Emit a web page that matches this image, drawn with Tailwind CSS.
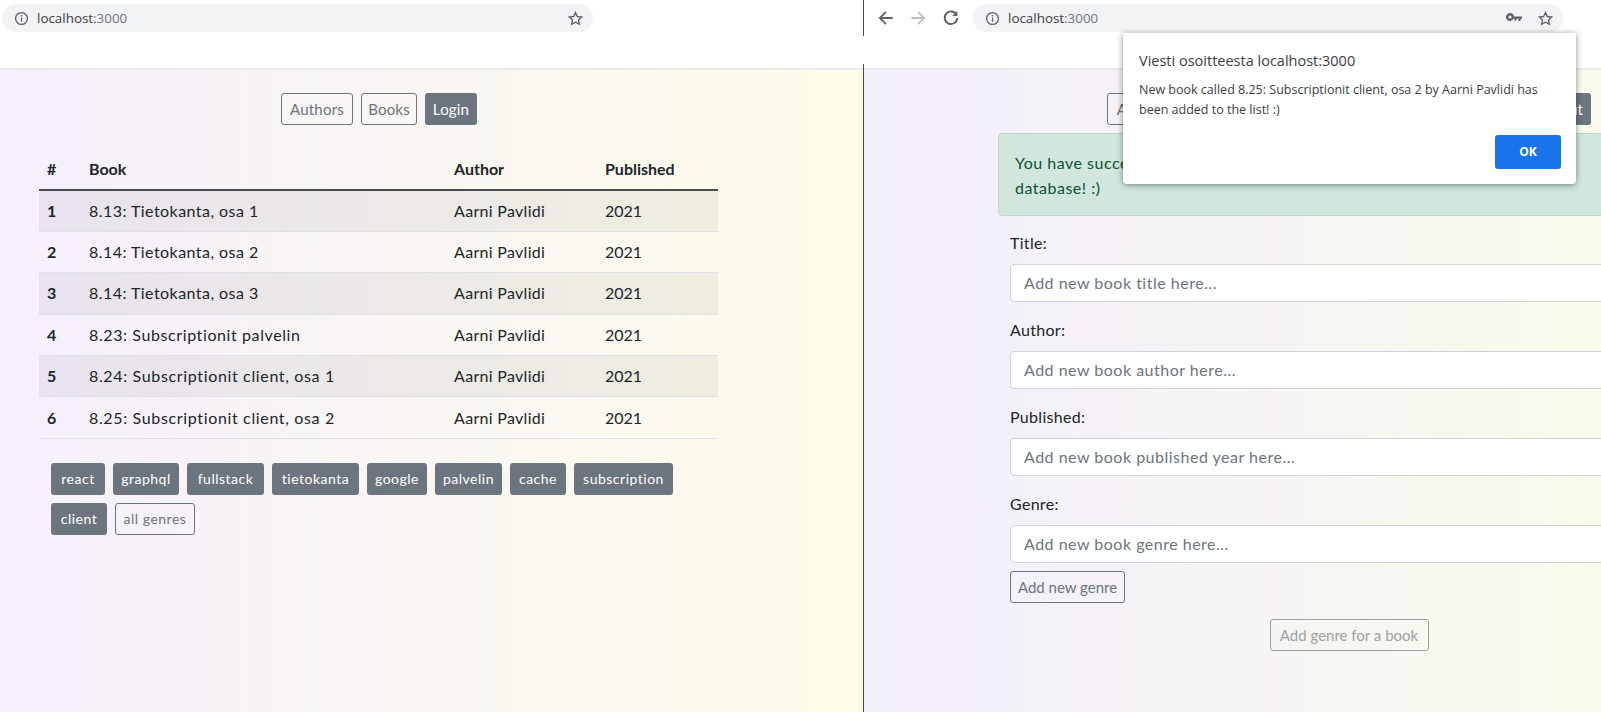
<!DOCTYPE html>
<html>
<head>
<meta charset="utf-8">
<script src="https://cdn.jsdelivr.net/npm/@tailwindcss/browser@4"></script>
</head>
<body class="overflow-hidden bg-white">
<div class="relative flex h-[712px] w-[1601px] overflow-hidden font-['Lato',sans-serif] text-[16px] text-[#212529]">
  <!-- left window -->
  <section class="flex w-[863px] shrink-0 flex-col">
    <header class="h-[70px] shrink-0 border-b-2 border-[#e9e9ea] bg-white pt-1 pl-[2px]">
      <div class="flex h-7 w-[591px] items-center rounded-full bg-[#f1f3f4] pl-3 pr-[9px] font-['Open_Sans',sans-serif] text-[13.4px] text-[#3c4043]">
        <svg class="mr-2 size-[15px]" viewBox="0 0 16 16" fill="none" stroke="#5f6368" stroke-width="1.4"><circle cx="8" cy="8" r="6.3"/><path d="M8 7v4.5M8 4.2v1.6"/></svg>
        <span>localhost<span class="text-[#70757a]">:3000</span></span>
        <svg class="ml-auto size-[17px]" viewBox="0 0 24 24" fill="none" stroke="#5f6368" stroke-width="1.9"><path d="M12 3.5l2.6 5.7 6.1.7-4.5 4.2 1.2 6.1-5.4-3-5.4 3 1.2-6.1-4.5-4.2 6.1-.7z"/></svg>
      </div>
    </header>
    <main class="flex-1 bg-gradient-to-r from-[#f5f0fb] to-[#fdfdea] pl-[39px] pt-[23px]">
      <div class="w-[679px]">
        <nav class="flex justify-center gap-2 pl-[1px] text-[15px] tracking-[0.2px]">
          <a class="flex h-8 w-[72px] items-center justify-center rounded-[3px] border border-[#6c757d] text-[#6c757d]">Authors</a>
          <a class="flex h-8 w-[56px] items-center justify-center rounded-[3px] border border-[#6c757d] text-[#6c757d]">Books</a>
          <a class="flex h-8 w-[52px] items-center justify-center rounded-[3px] bg-[#6c757d] text-white">Login</a>
        </nav>
        <table class="mt-6 w-[679px] table-fixed border-collapse text-left">
          <colgroup><col class="w-[42px]"><col class="w-[365px]"><col class="w-[151px]"><col class="w-[121px]"></colgroup>
          <thead class="font-bold">
            <tr class="h-[41px] border-b-2 border-[#4a4d50]"><th class="px-2">#</th><th class="px-2">Book</th><th class="px-2">Author</th><th class="px-2">Published</th></tr>
          </thead>
          <tbody>
            <tr class="h-[41.4px] border-b border-[#dee2e6] bg-black/5"><th class="px-2">1</th><td class="px-2 tracking-[0.45px]">8.13: Tietokanta, osa 1</td><td class="px-2 tracking-[0.3px]">Aarni Pavlidi</td><td class="px-2">2021</td></tr>
            <tr class="h-[41.4px] border-b border-[#dee2e6]"><th class="px-2">2</th><td class="px-2 tracking-[0.45px]">8.14: Tietokanta, osa 2</td><td class="px-2 tracking-[0.3px]">Aarni Pavlidi</td><td class="px-2">2021</td></tr>
            <tr class="h-[41.4px] border-b border-[#dee2e6] bg-black/5"><th class="px-2">3</th><td class="px-2 tracking-[0.45px]">8.14: Tietokanta, osa 3</td><td class="px-2 tracking-[0.3px]">Aarni Pavlidi</td><td class="px-2">2021</td></tr>
            <tr class="h-[41.4px] border-b border-[#dee2e6]"><th class="px-2">4</th><td class="px-2 tracking-[0.6px]">8.23: Subscriptionit palvelin</td><td class="px-2 tracking-[0.3px]">Aarni Pavlidi</td><td class="px-2">2021</td></tr>
            <tr class="h-[41.4px] border-b border-[#dee2e6] bg-black/5"><th class="px-2">5</th><td class="px-2 tracking-[0.65px]">8.24: Subscriptionit client, osa 1</td><td class="px-2 tracking-[0.3px]">Aarni Pavlidi</td><td class="px-2">2021</td></tr>
            <tr class="h-[41.4px] border-b border-[#dee2e6]"><th class="px-2">6</th><td class="px-2 tracking-[0.65px]">8.25: Subscriptionit client, osa 2</td><td class="px-2 tracking-[0.3px]">Aarni Pavlidi</td><td class="px-2">2021</td></tr>
          </tbody>
        </table>
        <div class="ml-3 mt-6 flex w-[667px] flex-wrap gap-2 text-[14px] tracking-[0.5px] text-white">
          <a class="flex h-8 w-[54px] items-center justify-center rounded-[3px] bg-[#6c757d]">react</a>
          <a class="flex h-8 w-[66px] items-center justify-center rounded-[3px] bg-[#6c757d]">graphql</a>
          <a class="flex h-8 w-[77px] items-center justify-center rounded-[3px] bg-[#6c757d]">fullstack</a>
          <a class="flex h-8 w-[87px] items-center justify-center rounded-[3px] bg-[#6c757d]">tietokanta</a>
          <a class="flex h-8 w-[60px] items-center justify-center rounded-[3px] bg-[#6c757d]">google</a>
          <a class="flex h-8 w-[67px] items-center justify-center rounded-[3px] bg-[#6c757d]">palvelin</a>
          <a class="flex h-8 w-[56px] items-center justify-center rounded-[3px] bg-[#6c757d]">cache</a>
          <a class="flex h-8 w-[99px] items-center justify-center rounded-[3px] bg-[#6c757d]">subscription</a>
          <a class="flex h-8 w-[56px] items-center justify-center rounded-[3px] bg-[#6c757d]">client</a>
          <a class="flex h-8 w-[80px] items-center justify-center rounded-[3px] border border-[#6c757d] text-[#6c757d]">all genres</a>
        </div>
      </div>
    </main>
  </section>

  <div class="w-[1px] shrink-0 bg-[#4a4a4a]"></div>

  <!-- right window -->
  <section class="flex min-w-0 flex-1 flex-col">
    <header class="h-[70px] shrink-0 border-b-2 border-[#e9e9ea] bg-white pt-1">
      <div class="flex items-center">
        <div class="flex w-[109px] items-center pl-[13px] gap-[14px]">
          <svg class="size-[18px]" viewBox="0 0 16 16" fill="none" stroke="#5f6368" stroke-width="1.6"><path d="M14 8H2.5M8 2.5L2.5 8 8 13.500"/></svg>
          <svg class="size-[18px]" viewBox="0 0 16 16" fill="none" stroke="#bcbfc3" stroke-width="1.6"><path d="M2 8h11.5M8 2.5L13.5 8 8 13.500"/></svg>
          <svg class="ml-[1px] size-[18px]" viewBox="0 0 16 16" fill="none" stroke="#5f6368" stroke-width="1.7"><path d="M13 5.2A5.600 5.600 0 1 0 13.600 8"/><path d="M13.600 1.800v4.400H9.200" fill="#5f6368" stroke="none"/></svg>
        </div>
        <div class="flex h-7 w-[590px] items-center rounded-full bg-[#f1f3f4] pl-3 pr-[9px] font-['Open_Sans',sans-serif] text-[13.4px] text-[#3c4043]">
          <svg class="mr-2 size-[15px]" viewBox="0 0 16 16" fill="none" stroke="#5f6368" stroke-width="1.4"><circle cx="8" cy="8" r="6.3"/><path d="M8 7v4.5M8 4.2v1.6"/></svg>
          <span>localhost<span class="text-[#70757a]">:3000</span></span>
          <svg class="ml-auto mr-[15px] h-[10px] w-[16px]" viewBox="0 0 16 10" fill="#5f6368"><path d="M4 0a4 4 0 1 1-3.600 5.800A4 4 0 0 1 4 0zm0 2.400a1.600 1.600 0 1 0 0 3.200 1.600 1.600 0 0 0 0-3.200zM7 3.400h9v2.400h-1.500V8h-2V5.800H10.500V7.500H8.500V5.800H7z"/></svg>
          <svg class="size-[17px]" viewBox="0 0 24 24" fill="none" stroke="#5f6368" stroke-width="1.9"><path d="M12 3.5l2.6 5.7 6.1.7-4.500 4.200 1.200 6.100-5.400-3-5.400 3 1.200-6.100-4.500-4.200 6.100-.7z"/></svg>
        </div>
      </div>
    </header>
    <main class="flex-1 overflow-hidden bg-gradient-to-r from-[#f3eefc] to-[#fafaec] pl-[134px] pt-[23px]">
      <div class="w-[702px]">
        <nav class="flex justify-center gap-2 text-[15px]">
          <a class="flex h-8 w-[72px] items-center justify-center rounded-[3px] border border-[#6c757d] text-[#6c757d]">Authors</a>
          <div class="h-8 w-[320px]"></div>
          <a class="flex h-8 w-[76px] items-center justify-end rounded-[3px] bg-[#6c757d] pr-2 text-white">Logout</a>
        </nav>
        <div class="mt-2 h-[83px] rounded-[4px] border border-[#badbcc] bg-[#d1e7dd] p-4 leading-[25px] tracking-[0.5px] whitespace-nowrap text-[#0f5132]">You have successfully added 8.25: Subscriptionit client, osa 2 to the<br>database! :)</div>
        <form class="mt-[14px] flex flex-col px-3">
          <label class="mb-2 leading-[25.6px] tracking-[0.3px]">Title:</label>
          <input class="mb-[15.5px] h-[38px] rounded-[4px] border border-[#ced4da] bg-white pl-[13px] pr-3 tracking-[0.5px] placeholder:text-[#6c757d]" placeholder="Add new book title here...">
          <label class="mb-2 leading-[25.6px] tracking-[0.3px]">Author:</label>
          <input class="mb-[15.5px] h-[38px] rounded-[4px] border border-[#ced4da] bg-white pl-[13px] pr-3 tracking-[0.5px] placeholder:text-[#6c757d]" placeholder="Add new book author here...">
          <label class="mb-2 leading-[25.6px] tracking-[0.3px]">Published:</label>
          <input class="mb-[15.5px] h-[38px] rounded-[4px] border border-[#ced4da] bg-white pl-[13px] pr-3 tracking-[0.5px] placeholder:text-[#6c757d]" placeholder="Add new book published year here...">
          <label class="mb-2 leading-[25.6px] tracking-[0.3px]">Genre:</label>
          <input class="h-[38px] rounded-[4px] border border-[#ced4da] bg-white pl-[13px] pr-3 tracking-[0.5px] placeholder:text-[#6c757d]" placeholder="Add new book genre here...">
          <button type="button" class="mt-2 h-8 w-[115px] rounded-[3px] border border-[#6c757d] text-[15px] text-[#6c757d]">Add new genre</button>
          <button type="button" class="mx-auto mt-4 h-8 w-[159px] rounded-[3px] border border-[#6c757d] text-[15px] text-[#6c757d] opacity-65">Add genre for a book</button>
        </form>
      </div>
    </main>
  </section>

  <!-- white strip lying over both windows -->
  <div class="absolute left-0 top-[36px] h-[28px] w-[1130px] bg-white"></div>

  <!-- browser alert dialog -->
  <div class="absolute left-[1123px] top-[33px] h-[151px] w-[453px] rounded-b-[4px] bg-white px-4 pt-4 font-['Open_Sans',sans-serif] text-[#3c4043] shadow-[0_1px_6px_rgba(0,0,0,0.45)]">
    <p class="text-[14.5px] leading-[24px]">Viesti osoitteesta localhost:3000</p>
    <p class="mt-[7px] w-[420px] text-[12.5px] leading-[20px]">New book called 8.25: Subscriptionit client, osa 2 by Aarni Pavlidi has been added to the list! :)</p>
    <button type="button" class="absolute left-[372px] top-[102px] h-[34px] w-[66px] rounded-[3px] bg-[#1a73e8] text-[12px] font-bold text-white">OK</button>
  </div>
</div>
</body>
</html>
